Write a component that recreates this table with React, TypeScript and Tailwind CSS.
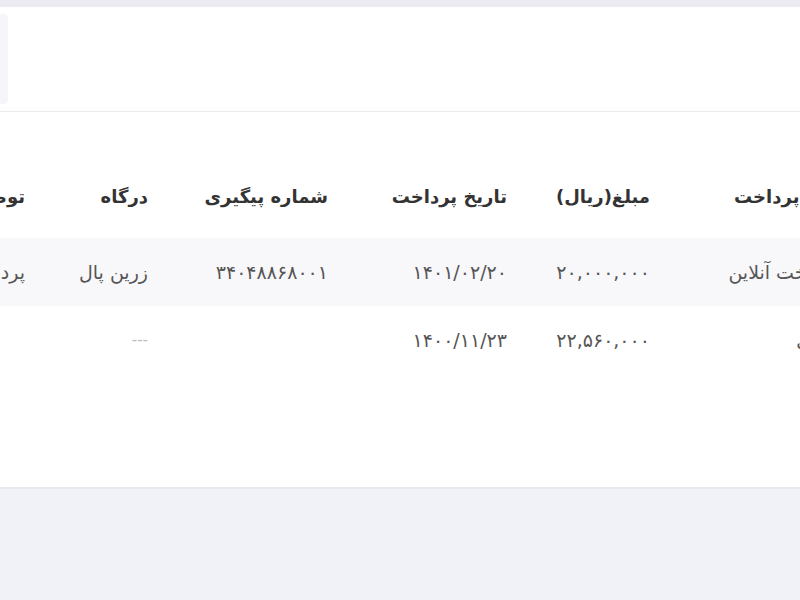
import React from "react";

const widths = [186, 143, 179, 180, 123, 200];

const headers = ["نوع پرداخت", "مبلغ(ریال)", "تاریخ پرداخت", "شماره پیگیری", "درگاه", "توضیحات"];
const rows = [
  ["پرداخت آنلاین", "۲۰,۰۰۰,۰۰۰", "۱۴۰۱/۰۲/۲۰", "۳۴۰۴۸۸۶۸۰۰۱", "زرین پال", "پرداخت موفق"],
  ["نقدی", "۲۲,۵۶۰,۰۰۰", "۱۴۰۰/۱۱/۲۳", "", "---", ""],
];

function Row({ cells, head, band }: { cells: string[]; head?: boolean; band?: boolean }) {
  return (
    <div
      dir="rtl"
      className={`flex items-center mr-[-36px] h-[68px] ${head ? "pb-[16px]" : ""} ${band ? "bg-[#f8f8fa]" : ""}`}
    >
      {cells.map((c, i) => (
        <div
          key={i}
          style={{ width: widths[i] }}
          className={`shrink-0 text-right whitespace-nowrap ${
            head
              ? "font-bold text-[18px] text-[#333333]"
              : c === "---"
              ? "text-[15px] text-[#bbbbbb]"
              : "text-[19px] text-[#555555]"
          }`}
        >
          {c}
        </div>
      ))}
    </div>
  );
}

export default function App() {
  return (
    <div
      className="w-[800px] h-[600px] overflow-hidden bg-[#f1f2f7] flex flex-col"
      style={{ fontFamily: '"DejaVu Sans", sans-serif' }}
    >
      <div className="h-[7px] bg-[#ebebf1] shrink-0" />
      <div className="bg-white shrink-0 border-b-2 border-[#e8e8ee]">
        <div className="h-[105px] border-b border-[#ebebeb] flex items-center">
          <div className="w-[8px] h-[90px] bg-[#f6f6fa] rounded-r" />
        </div>
        <div className="pt-[58px] h-[375px]">
          <Row cells={headers} head />
          <Row cells={rows[0]} band />
          <Row cells={rows[1]} />
        </div>
      </div>
    </div>
  );
}
